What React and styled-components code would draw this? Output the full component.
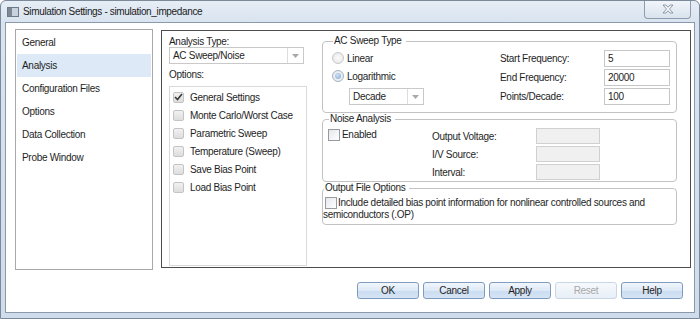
import styled, { createGlobalStyle } from "styled-components";

const GlobalStyle = createGlobalStyle`
  html, body {
    margin: 0;
    padding: 0;
    background: #ffffff;
  }
`;

const Window = styled.div`
  width: 700px;
  height: 319px;
  box-sizing: border-box;
  display: flex;
  flex-direction: column;
  border: 1px solid #7b8998;
  border-radius: 6px 6px 0 0;
  overflow: hidden;
  background: linear-gradient(180deg, #e6edf6 0px, #d9e4f0 20px, #cfdcec 100%);
  font-family: "Liberation Sans", Arial, sans-serif;
  font-size: 10px;
  letter-spacing: -0.3px;
  color: #1e1e1e;
`;

const TitleBar = styled.div`
  height: 21px;
  display: flex;
  align-items: center;
  position: relative;
  padding-left: 6px;
`;

const TitleText = styled.span`
  margin-left: 4px;
  font-size: 10px;
  letter-spacing: -0.35px;
  color: #1b1b1b;
`;

const CloseButton = styled.div`
  position: absolute;
  top: -1px;
  right: 8px;
  width: 47px;
  height: 19px;
  box-sizing: border-box;
  border: 1px solid #8e9cad;
  border-top: none;
  border-radius: 0 0 4px 4px;
  background: linear-gradient(180deg, #f2f6fa, #d9e3ee);
  display: flex;
  align-items: center;
  justify-content: center;
`;

const Client = styled.div`
  flex: 1;
  margin: 0 4px 5px 4px;
  border: 1px solid #8a99ab;
  background: #ffffff;
  padding: 6px 3px 0 9px;
  display: flex;
  flex-direction: column;
`;

const TopRow = styled.div`
  display: flex;
  align-items: flex-start;
  gap: 8px;
`;

const NavList = styled.div`
  width: 138px;
  height: 241px;
  box-sizing: border-box;
  border: 1px solid #a8a8a8;
  padding: 1px 1px 0 1px;
`;

const NavItem = styled.div`
  height: 23px;
  line-height: 23px;
  padding-left: 5px;
  background: ${(p) => (p.$selected ? "#dde9f7" : "transparent")};
`;

const MainPanel = styled.div`
  width: 530px;
  height: 238px;
  margin-top: 1px;
  box-sizing: border-box;
  border: 1px solid #4d4d4d;
  padding: 5px 13px 1px 7px;
  display: flex;
  gap: 15px;
`;

const LeftColumn = styled.div`
  width: 138px;
  display: flex;
  flex-direction: column;
`;

const Label = styled.div`
  line-height: 11px;
  margin-top: ${(p) => p.$top || 0}px;
`;

const Select = styled.div`
  width: ${(p) => p.$width}px;
  height: 17px;
  box-sizing: border-box;
  border: 1px solid #c9c9c9;
  display: flex;
  align-items: center;
  background: #ffffff;
  margin-top: ${(p) => p.$top || 0}px;
  margin-left: ${(p) => p.$left || 0}px;
`;

const SelectValue = styled.span`
  flex: 1;
  padding-left: 3px;
`;

const SelectArrow = styled.span`
  width: 15px;
  height: 100%;
  border-left: 1px solid #dcdcdc;
  display: flex;
  align-items: center;
  justify-content: center;
`;

const OptionsBox = styled.div`
  flex: 1;
  margin-top: 6px;
  border: 1px solid #dadada;
  padding-top: 1px;
`;

const OptionRow = styled.div`
  height: 18px;
  display: flex;
  align-items: center;
  padding-left: 3px;
  gap: 6px;
`;

const SoftCheck = styled.span`
  width: 11px;
  height: 11px;
  box-sizing: border-box;
  border: 1px solid #c4c4c4;
  border-radius: 2px;
  background: linear-gradient(180deg, #f1f1f1, #dddddd);
  display: inline-flex;
  align-items: center;
  justify-content: center;
`;

const BoxCheck = styled.span`
  display: inline-block;
  width: 12px;
  height: 12px;
  box-sizing: border-box;
  border: 1px solid #9a9a9a;
  background: linear-gradient(135deg, #e4e8ee, #ffffff);
  vertical-align: middle;
  margin: ${(p) => p.$margin || "0"};
`;

const RightColumn = styled.div`
  flex: 1;
  display: flex;
  flex-direction: column;
  margin-top: -1px;
`;

const Group = styled.fieldset`
  margin: 0;
  padding: ${(p) => p.$pad};
  border: 1px solid #c2c2c2;
  border-radius: 4px;
  min-width: 0;
`;

const Legend = styled.legend`
  padding: 0 4px 0 1px;
  margin-left: 1px;
  line-height: 12px;
  background: #ffffff;
`;

const SweepBody = styled.div`
  display: flex;
  justify-content: space-between;
`;

const RadioColumn = styled.div`
  display: flex;
  flex-direction: column;
`;

const RadioRow = styled.div`
  height: 18px;
  display: flex;
  align-items: center;
  gap: 3px;
`;

const Radio = styled.span`
  width: 12px;
  height: 12px;
  box-sizing: border-box;
  border-radius: 50%;
  border: 1px solid ${(p) => (p.$checked ? "#9fb4cc" : "#c8c8c8")};
  background: radial-gradient(circle, #fafafa 0, #e6e6e6 100%);
  display: inline-flex;
  align-items: center;
  justify-content: center;
  &::after {
    content: "";
    display: ${(p) => (p.$checked ? "block" : "none")};
    width: 6px;
    height: 6px;
    border-radius: 50%;
    background: radial-gradient(circle at 40% 35%, #cfe3f7, #7ea5cf);
  }
`;

const FieldGrid = styled.div`
  display: grid;
  grid-template-columns: ${(p) => p.$labelWidth}px ${(p) => p.$inputWidth}px;
  row-gap: 2px;
  align-items: center;
  margin-top: ${(p) => p.$top || 0}px;
`;

const TextInput = styled.div`
  height: ${(p) => p.$height}px;
  box-sizing: border-box;
  border: 1px solid ${(p) => (p.$disabled ? "#d0d0d0" : "#c6c6c6")};
  background: ${(p) => (p.$disabled ? "#f0f0f0" : "#ffffff")};
  padding-left: 3px;
  display: flex;
  align-items: center;
`;

const NoiseBody = styled.div`
  display: flex;
  align-items: flex-start;
`;

const EnabledBox = styled.div`
  width: 104px;
  display: flex;
  align-items: flex-start;
  gap: 2px;
  padding-top: 1px;
  line-height: 11px;
`;

const OutputText = styled.div`
  line-height: 11px;
`;

const ButtonRow = styled.div`
  margin-top: 12px;
  padding-right: 8px;
  display: flex;
  justify-content: flex-end;
  gap: 4px;
`;

const Button = styled.div`
  width: 62px;
  height: 17px;
  box-sizing: border-box;
  border: 1px solid ${(p) => (p.$disabled ? "#c8d6e6" : "#7f9cc0")};
  border-radius: 3px;
  background: ${(p) =>
    p.$disabled
      ? "linear-gradient(180deg, #f6f9fc, #e8eff7)"
      : "linear-gradient(180deg, #f1f6fc 0%, #dde9f6 50%, #cadcf1 51%, #d6e5f5 100%)"};
  color: ${(p) => (p.$disabled ? "#a8a8a8" : "#1e1e1e")};
  display: flex;
  align-items: center;
  justify-content: center;
`;

const navItems = [
  "General",
  "Analysis",
  "Configuration Files",
  "Options",
  "Data Collection",
  "Probe Window",
];

const options = [
  "General Settings",
  "Monte Carlo/Worst Case",
  "Parametric Sweep",
  "Temperature (Sweep)",
  "Save Bias Point",
  "Load Bias Point",
];

function Arrow() {
  return (
    <svg width="7" height="4" viewBox="0 0 7 4">
      <path d="M0 0 L7 0 L3.5 4 Z" fill="#a9a9a9" />
    </svg>
  );
}

function WindowIcon() {
  return (
    <svg width="12" height="10" viewBox="0 0 12 10">
      <rect x="0.5" y="0.5" width="11" height="9" fill="#c9d2dc" stroke="#6d7986" />
      <rect x="1" y="1" width="4" height="8" fill="#7d8895" />
    </svg>
  );
}

function CloseGlyph() {
  return (
    <svg width="12" height="10" viewBox="0 0 12 10">
      <path
        d="M1 1 L4 1 L6 3.2 L8 1 L11 1 L7.5 5 L11 9 L8 9 L6 6.8 L4 9 L1 9 L4.5 5 Z"
        fill="#f4f6f9"
        stroke="#7a8592"
        strokeWidth="0.8"
        strokeLinejoin="round"
      />
    </svg>
  );
}

function Tick() {
  return (
    <svg width="9" height="8" viewBox="0 0 9 8">
      <path d="M1 4 L3.5 6.5 L8 1" fill="none" stroke="#3a3a3a" strokeWidth="1.6" />
    </svg>
  );
}

export default function App() {
  return (
    <>
      <GlobalStyle />
      <Window>
        <TitleBar>
          <WindowIcon />
          <TitleText>Simulation Settings - simulation_impedance</TitleText>
          <CloseButton>
            <CloseGlyph />
          </CloseButton>
        </TitleBar>
        <Client>
          <TopRow>
            <NavList>
              {navItems.map((item) => (
                <NavItem key={item} $selected={item === "Analysis"}>
                  {item}
                </NavItem>
              ))}
            </NavList>
            <MainPanel>
              <LeftColumn>
                <Label>Analysis Type:</Label>
                <Select $width={135}>
                  <SelectValue>AC Sweep/Noise</SelectValue>
                  <SelectArrow>
                    <Arrow />
                  </SelectArrow>
                </Select>
                <Label $top={5}>Options:</Label>
                <OptionsBox>
                  {options.map((opt, i) => (
                    <OptionRow key={opt}>
                      <SoftCheck>{i === 0 && <Tick />}</SoftCheck>
                      {opt}
                    </OptionRow>
                  ))}
                </OptionsBox>
              </LeftColumn>
              <RightColumn>
                <Group $pad="2px 6px 7px 9px">
                  <Legend>AC Sweep Type</Legend>
                  <SweepBody>
                    <RadioColumn>
                      <RadioRow>
                        <Radio />
                        Linear
                      </RadioRow>
                      <RadioRow>
                        <Radio $checked />
                        Logarithmic
                      </RadioRow>
                      <Select $width={75} $left={17} $top={3}>
                        <SelectValue>Decade</SelectValue>
                        <SelectArrow>
                          <Arrow />
                        </SelectArrow>
                      </Select>
                    </RadioColumn>
                    <FieldGrid $labelWidth={104} $inputWidth={66} $top={1}>
                      <span>Start Frequency:</span>
                      <TextInput $height={17}>5</TextInput>
                      <span>End Frequency:</span>
                      <TextInput $height={17}>20000</TextInput>
                      <span>Points/Decade:</span>
                      <TextInput $height={17}>100</TextInput>
                    </FieldGrid>
                  </SweepBody>
                </Group>
                <Group $pad="3px 6px 1px 5px">
                  <Legend>Noise Analysis</Legend>
                  <NoiseBody>
                    <EnabledBox>
                      <BoxCheck />
                      Enabled
                    </EnabledBox>
                    <FieldGrid $labelWidth={104} $inputWidth={64}>
                      <span>Output Voltage:</span>
                      <TextInput $height={16} $disabled />
                      <span>I/V Source:</span>
                      <TextInput $height={16} $disabled />
                      <span>Interval:</span>
                      <TextInput $height={16} $disabled />
                    </FieldGrid>
                  </NoiseBody>
                </Group>
                <Group $pad="3px 4px 4px 0">
                  <Legend>Output File Options</Legend>
                  <OutputText>
                    <BoxCheck $margin="0 1px 0 2px" />
                    Include detailed bias point information for nonlinear
                    controlled sources and semiconductors (.OP)
                  </OutputText>
                </Group>
              </RightColumn>
            </MainPanel>
          </TopRow>
          <ButtonRow>
            <Button>OK</Button>
            <Button>Cancel</Button>
            <Button>Apply</Button>
            <Button $disabled>Reset</Button>
            <Button>Help</Button>
          </ButtonRow>
        </Client>
      </Window>
    </>
  );
}
